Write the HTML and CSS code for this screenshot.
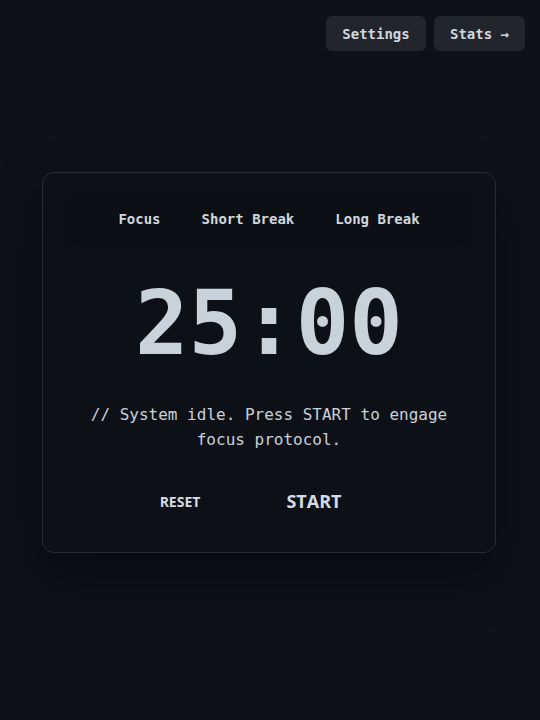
FILE: index.html
```html
<!DOCTYPE html>
<html lang="en">
<head>
<meta charset="utf-8">
<title>Focus Timer</title>
<link rel="stylesheet" href="styles.css">
</head>
<body>
<header class="topbar">
  <button class="nav-btn nav-settings">Settings</button>
  <button class="nav-btn nav-stats">Stats →</button>
</header>
<main class="main">
  <section class="card">
    <nav class="tabs">
      <button class="tab">Focus</button>
      <button class="tab">Short Break</button>
      <button class="tab">Long Break</button>
    </nav>
    <div class="timer">25:00</div>
    <p class="status">// System idle. Press START to engage<br>focus protocol.</p>
    <div class="controls">
      <button class="ctrl ctrl-reset">RESET</button>
      <button class="ctrl ctrl-start">START</button>
    </div>
  </section>
</main>
</body>
</html>
```
FILE: styles.css
```css
* { box-sizing: border-box; }
html, body { margin: 0; padding: 0; }
body {
  width: 540px;
  height: 720px;
  background: #0e1118;
  color: #c9d1d9;
  font-family: "DejaVu Sans Mono", "Liberation Mono", monospace;
  overflow: hidden;
}
button {
  font: inherit;
  color: inherit;
  background: none;
  border: 0;
  cursor: pointer;
  padding: 0;
}
.topbar {
  display: flex;
  justify-content: flex-end;
  gap: 8px;
  padding: 16px 15px 0 0;
}
.nav-btn {
  height: 35px;
  padding: 0 16px;
  background: #22252c;
  border-radius: 6px;
  font-size: 14px;
  font-weight: 700;
  color: #d0d7de;
}
.nav-settings { width: 100px; }
.nav-stats { width: 91px; }
.main {
  display: flex;
  justify-content: center;
  padding: 121px 2px 0 0;
}
.card {
  width: 454px;
  height: 381px;
  border: 1px solid #272b33;
  border-radius: 12px;
  background: #0d1017;
  box-shadow: 0 22px 50px rgba(0, 0, 0, 0.4);
  padding: 24px 27px 0;
  display: flex;
  flex-direction: column;
  align-items: center;
}
.tabs {
  width: 400px;
  height: 44px;
  display: flex;
  justify-content: center;
  align-items: center;
  background: #0c0f14;
  border-radius: 10px;
  box-shadow: 0 2px 10px rgba(0, 0, 0, 0.2);
}
.tab {
  font-size: 14px;
  font-weight: 700;
  padding: 0 20.5px;
  color: #d0d7de;
  line-height: 44px;
}
.timer {
  margin-top: 38px;
  font-size: 89px;
  font-weight: 700;
  line-height: 1;
  color: #c9d1db;
}
.status {
  margin: 34px 0 0;
  font-size: 16px;
  line-height: 25px;
  text-align: center;
  color: #c9d1d9;
}
.controls {
  margin-top: 29px;
  display: flex;
  align-items: center;
  gap: 20px;
}
.ctrl {
  height: 40px;
  font-family: "Open Sans", "Noto Sans", sans-serif;
  font-weight: 700;
  color: #d6dce3;
  text-align: center;
}
.ctrl-reset {
  width: 70px;
  font-size: 14px;
}
.ctrl-start {
  width: 158px;
  font-size: 18px;
}
```
